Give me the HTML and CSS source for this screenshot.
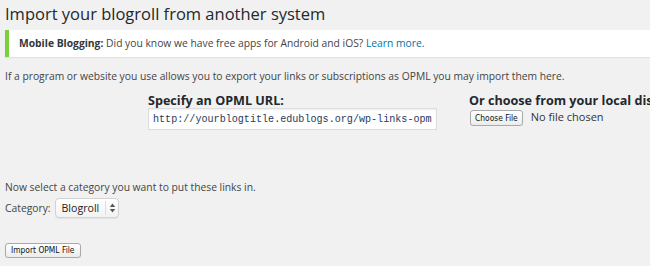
FILE: index.html
```html
<!DOCTYPE html>
<html lang="en">
<head>
  <meta charset="UTF-8">
  <title>Import Blogroll</title>
  <meta name="viewport" content="width=device-width, initial-scale=1.0">
  <link rel="stylesheet" href="styles.css">
</head>
<body>

  <div class="wrap">
    <h2>Import your blogroll from another system</h2>

    <!-- Bandeau d'information -->
    <div class="notice">
      <p><strong>Mobile Blogging:</strong> Did you know we have free apps for Android and iOS? <a href="#">Learn more.</a></p>
    </div>

    <p class="intro">If a program or website you use allows you to export your links or subscriptions as OPML you may import them here.</p>

    <form id="import-form">
      <div class="sources">
        <div class="source">
          <h3><label for="opml-url">Specify an OPML URL:</label></h3>
          <input type="text" id="opml-url" class="url-input" value="http://yourblogtitle.edublogs.org/wp-links-opml.php">
        </div>
        <div class="source">
          <h3><label for="userfile">Or choose from your local disk:</label></h3>
          <input type="file" id="userfile" class="file-input">
        </div>
      </div>

      <p class="category-help">Now select a category you want to put these links in.</p>
      <div class="category-row">
        <label for="cat-id">Category:</label>
        <div class="select-box">
          <select id="cat-id">
            <option value="2">Blogroll</option>
          </select>
          <svg class="select-arrows" width="7" height="10" viewBox="0 0 7 10">
            <path d="M3.5 0.5 L6.2 4 H0.8 Z" fill="#555"/>
            <path d="M3.5 9.5 L6.2 6 H0.8 Z" fill="#555"/>
          </svg>
        </div>
      </div>

      <div class="submit-row">
        <button type="submit" class="btn">Import OPML File</button>
      </div>
    </form>
  </div>

</body>
</html>
```

FILE: styles.css
```css
html, body {
  margin: 0;
  padding: 0;
  background: #f1f1f1;
  overflow: hidden;
}
body {
  font-family: 'Open Sans', sans-serif;
  font-size: 10.3px;
  color: #444;
}
.wrap {
  padding: 0 0 0 5px;
}
h2 {
  margin: 0;
  font-size: 16.5px;
  font-weight: 400;
  line-height: 27px;
  color: #23282d;
}
.notice {
  margin-top: 3px;
  background: #fff;
  border-left: 4px solid #7ad03a;
  box-shadow: 0 1px 1px rgba(0,0,0,0.06);
  padding: 6px 10px;
}
.notice p {
  margin: 0;
  line-height: 15px;
  color: #444;
}
.notice strong {
  color: #32373c;
}
.notice a {
  color: #0073aa;
  text-decoration: none;
}
.intro {
  margin: 12px 0 0;
  line-height: 15px;
}
.sources {
  display: flex;
  gap: 32px;
  margin-top: 9px;
  padding-left: 143px;
}
.source {
  flex: 0 0 auto;
}
.source h3 {
  margin: 0;
  font-size: 12.6px;
  font-weight: 700;
  line-height: 15px;
  color: #23282d;
  white-space: nowrap;
}
.url-input {
  box-sizing: border-box;
  display: block;
  width: 289px;
  height: 22px;
  margin: 0;
  padding: 0 4px;
  border: 1px solid #ddd;
  background: #fff;
  box-shadow: inset 0 1px 2px rgba(0,0,0,0.07);
  font-family: 'Liberation Mono', monospace;
  font-size: 10.1px;
  color: #2a3a5a;
  outline: none;
}
.file-input {
  display: block;
  margin: 1px 0 0 1px;
  font-family: 'Open Sans', sans-serif;
  font-size: 11px;
  color: #333;
}
.file-input::file-selector-button,
.btn {
  font-family: 'DejaVu Sans Condensed', 'DejaVu Sans', sans-serif;
  font-stretch: condensed;
  font-size: 8.4px;
  color: #111;
  background: linear-gradient(#ffffff, #ececec);
  border: 1px solid #a9a9a9;
  border-radius: 3px;
  box-shadow: 0 1px 1px rgba(0,0,0,0.08);
  cursor: pointer;
}
.file-input::file-selector-button {
  height: 16px;
  padding: 0 4px;
  margin-right: 8px;
}
.category-help {
  margin: 50px 0 0;
  line-height: 15px;
}
.category-row {
  display: flex;
  align-items: center;
  gap: 4px;
  margin-top: 3px;
}
.select-box {
  position: relative;
}
.select-box select {
  appearance: none;
  -webkit-appearance: none;
  box-sizing: border-box;
  width: 64px;
  height: 20px;
  padding: 0 0 0 6px;
  border: 1px solid #d3d3d3;
  border-radius: 4px;
  background: linear-gradient(#ffffff, #f2f2f2);
  box-shadow: 0 1px 1px rgba(0,0,0,0.06);
  font-family: 'Open Sans', sans-serif;
  font-size: 10.6px;
  color: #222;
  outline: none;
}
.select-box::after {
  content: "";
  position: absolute;
  top: 3px;
  bottom: 3px;
  right: 13px;
  border-left: 1px solid #ddd;
}
.select-arrows {
  position: absolute;
  top: 5px;
  right: 3px;
  pointer-events: none;
}
.submit-row {
  margin-top: 24px;
}
.btn {
  height: 15px;
  padding: 0 5px;
  line-height: 13px;
}
```
